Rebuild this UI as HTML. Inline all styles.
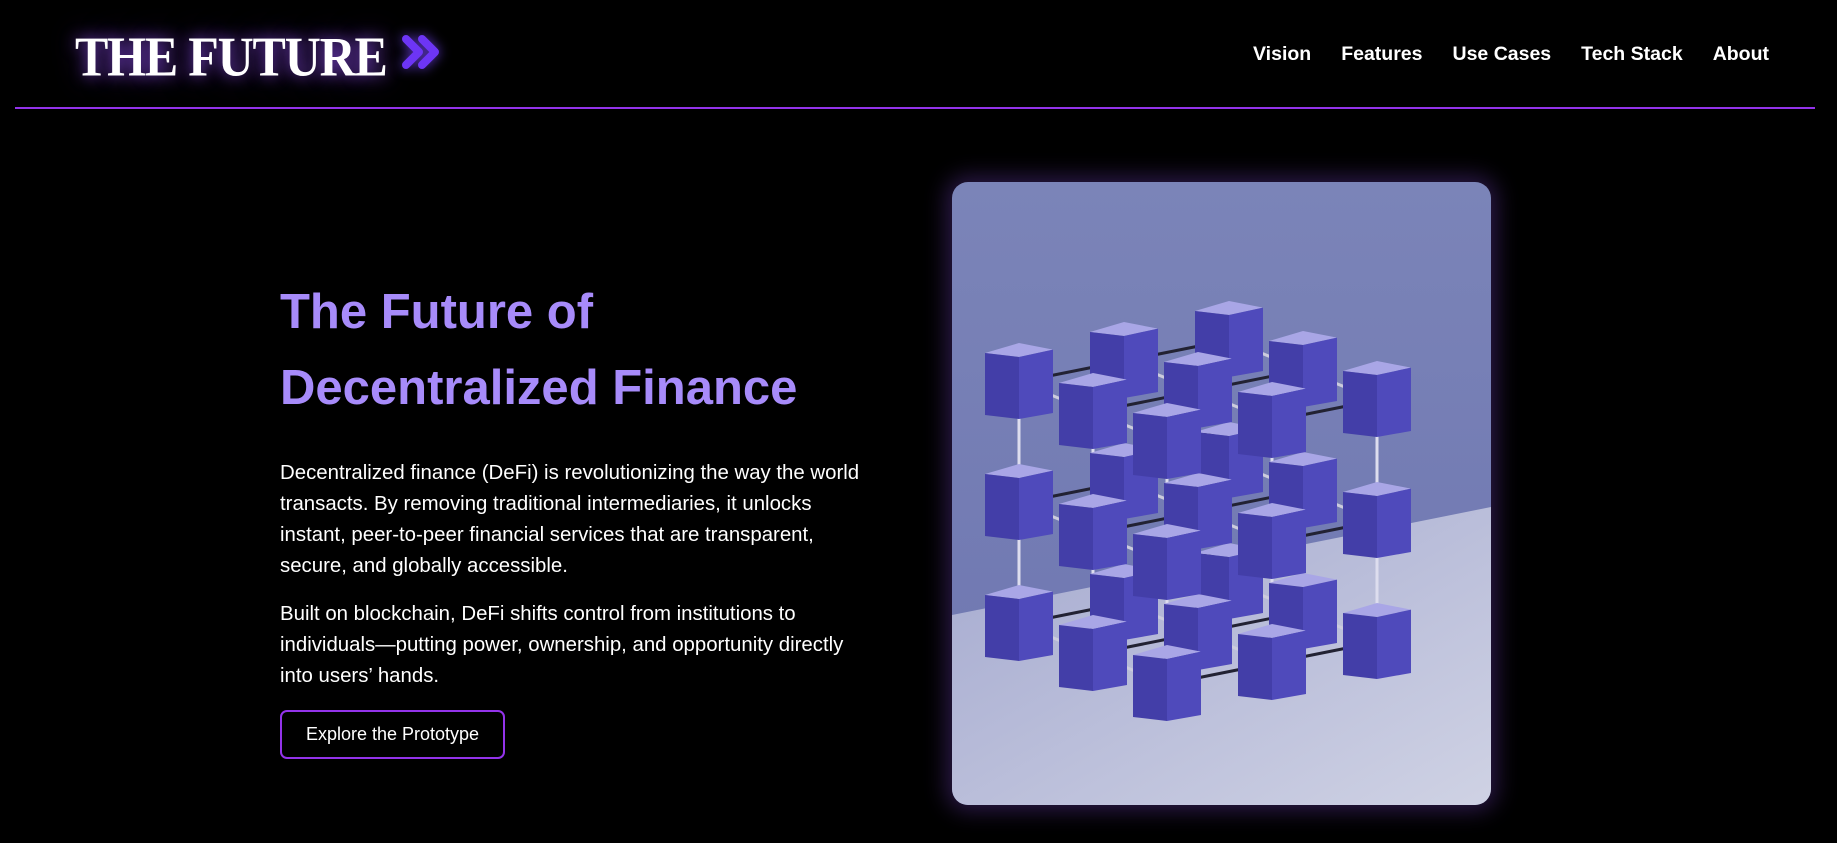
<!DOCTYPE html>
<html><head><meta charset="utf-8">
<style>
*{margin:0;padding:0;box-sizing:border-box}
html,body{width:1837px;height:843px;background:#000;overflow:hidden;font-family:"Liberation Sans",sans-serif;color:#fff}
.logo{position:absolute;left:75px;top:24px;font-family:"Liberation Serif",serif;font-weight:bold;font-size:50px;letter-spacing:-1.2px;color:#fff;text-shadow:0 0 14px rgba(140,80,230,.8),0 0 28px rgba(110,50,200,.5);white-space:nowrap;transform:scaleY(1.12);transform-origin:left top}
.chev{position:absolute;left:400px;top:33px;filter:drop-shadow(0 0 6px rgba(120,70,255,.8))}
nav{position:absolute;top:43px;right:68px;display:flex;gap:30px;font-size:19.5px;font-weight:bold}
.line{position:absolute;left:15px;top:107px;width:1800px;height:2px;background:#9333ea}
h1{position:absolute;left:280px;top:274px;font-size:49px;line-height:76px;font-weight:bold;color:#a78bfa}
.p{position:absolute;left:280px;font-size:20.4px;line-height:31px;color:#fff;white-space:nowrap}
.btn{position:absolute;left:280px;top:710px;width:225px;height:49px;border:2px solid #9333ea;border-radius:7px;font-size:18px;display:flex;align-items:center;justify-content:center}
.card{position:absolute;left:952px;top:182px;width:539px;height:623px;border-radius:16px;overflow:hidden;box-shadow:0 0 22px 6px rgba(120,70,200,.35)}
</style></head><body>
<div class="logo">THE FUTURE</div>
<svg class="chev" width="46" height="38" viewBox="0 0 46 38"><path d="M6 6 L19 19 L6 32 M22 6 L35 19 L22 32" fill="none" stroke="#6d35f5" stroke-width="8" stroke-linecap="round" stroke-linejoin="round"/></svg>
<nav><span>Vision</span><span>Features</span><span>Use Cases</span><span>Tech Stack</span><span>About</span></nav>
<div class="line"></div>
<h1>The Future of<br>Decentralized Finance</h1>
<div class="p" style="top:458px">Decentralized finance (DeFi) is revolutionizing the way the world<br>transacts. By removing traditional intermediaries, it unlocks<br>instant, peer-to-peer financial services that are transparent,<br>secure, and globally accessible.</div>
<div class="p" style="top:599px">Built on blockchain, DeFi shifts control from institutions to<br>individuals—putting power, ownership, and opportunity directly<br>into users’ hands.</div>
<div class="btn">Explore the Prototype</div>
<div class="card"><svg id="sv" width="539" height="623" viewBox="0 0 539 623">
<defs>
<linearGradient id="wall" x1="0" y1="0" x2="0" y2="1"><stop offset="0" stop-color="#7b84b8"/><stop offset="1" stop-color="#6d75b0"/></linearGradient>
<linearGradient id="floor" x1="0" y1="0" x2="1" y2="1"><stop offset="0" stop-color="#a4a9cf"/><stop offset="1" stop-color="#cfd2e4"/></linearGradient>
</defs>
<rect width="539" height="623" fill="url(#wall)"/>
<polygon points="0,433 539,325 539,623 0,623" fill="url(#floor)"/>
<g id="g"></g>
</svg></div>
<script>
(function(){
var g=document.getElementById('g'),o=[67,200],R=[74,30],D=[105,-21],V=[0,121],s=68,t=10,h='';
function P(r,d,v){return [o[0]+r*R[0]+d*D[0]+v*V[0],o[1]+r*R[1]+d*D[1]+v*V[1]];}
for(var d=2;d>=0;d--)for(var r=0;r<3;r++)for(var v=0;v<3;v++){var a=P(r,d,v);
 if(r<2){var b=P(r+1,d,v);h+='<line x1="'+a[0]+'" y1="'+a[1]+'" x2="'+b[0]+'" y2="'+b[1]+'" stroke="#ccd" stroke-width="3"/>';}
 if(d<2){var b=P(r,d+1,v);h+='<line x1="'+a[0]+'" y1="'+a[1]+'" x2="'+b[0]+'" y2="'+b[1]+'" stroke="#223" stroke-width="3"/>';}
 if(v<2){var b=P(r,d,v+1);h+='<line x1="'+a[0]+'" y1="'+a[1]+'" x2="'+b[0]+'" y2="'+b[1]+'" stroke="#dde" stroke-width="3"/>';}
}
for(var d=2;d>=0;d--)for(var r=0;r<3;r++)for(var v=0;v<3;v++){var c=P(r,d,v),x=c[0]-s/2,y=c[1]-s/2+t/2;
 h+='<polygon points="'+x+','+y+' '+(x+s/2)+','+(y-t)+' '+(x+s)+','+(y-t/3)+' '+(x+s/2)+','+(y+t*0.4)+'" fill="#a9a6e6"/>';
 h+='<polygon points="'+x+','+y+' '+(x+s/2)+','+(y+t*0.4)+' '+(x+s/2)+','+(y+s-2)+' '+x+','+(y+s-6)+'" fill="#433ea8"/>';
 h+='<polygon points="'+(x+s/2)+','+(y+t*0.4)+' '+(x+s)+','+(y-t/3)+' '+(x+s)+','+(y+s-8)+' '+(x+s/2)+','+(y+s-2)+'" fill="#4f4abb"/>';
}
g.innerHTML=h;
})();
</script>
</body></html>
